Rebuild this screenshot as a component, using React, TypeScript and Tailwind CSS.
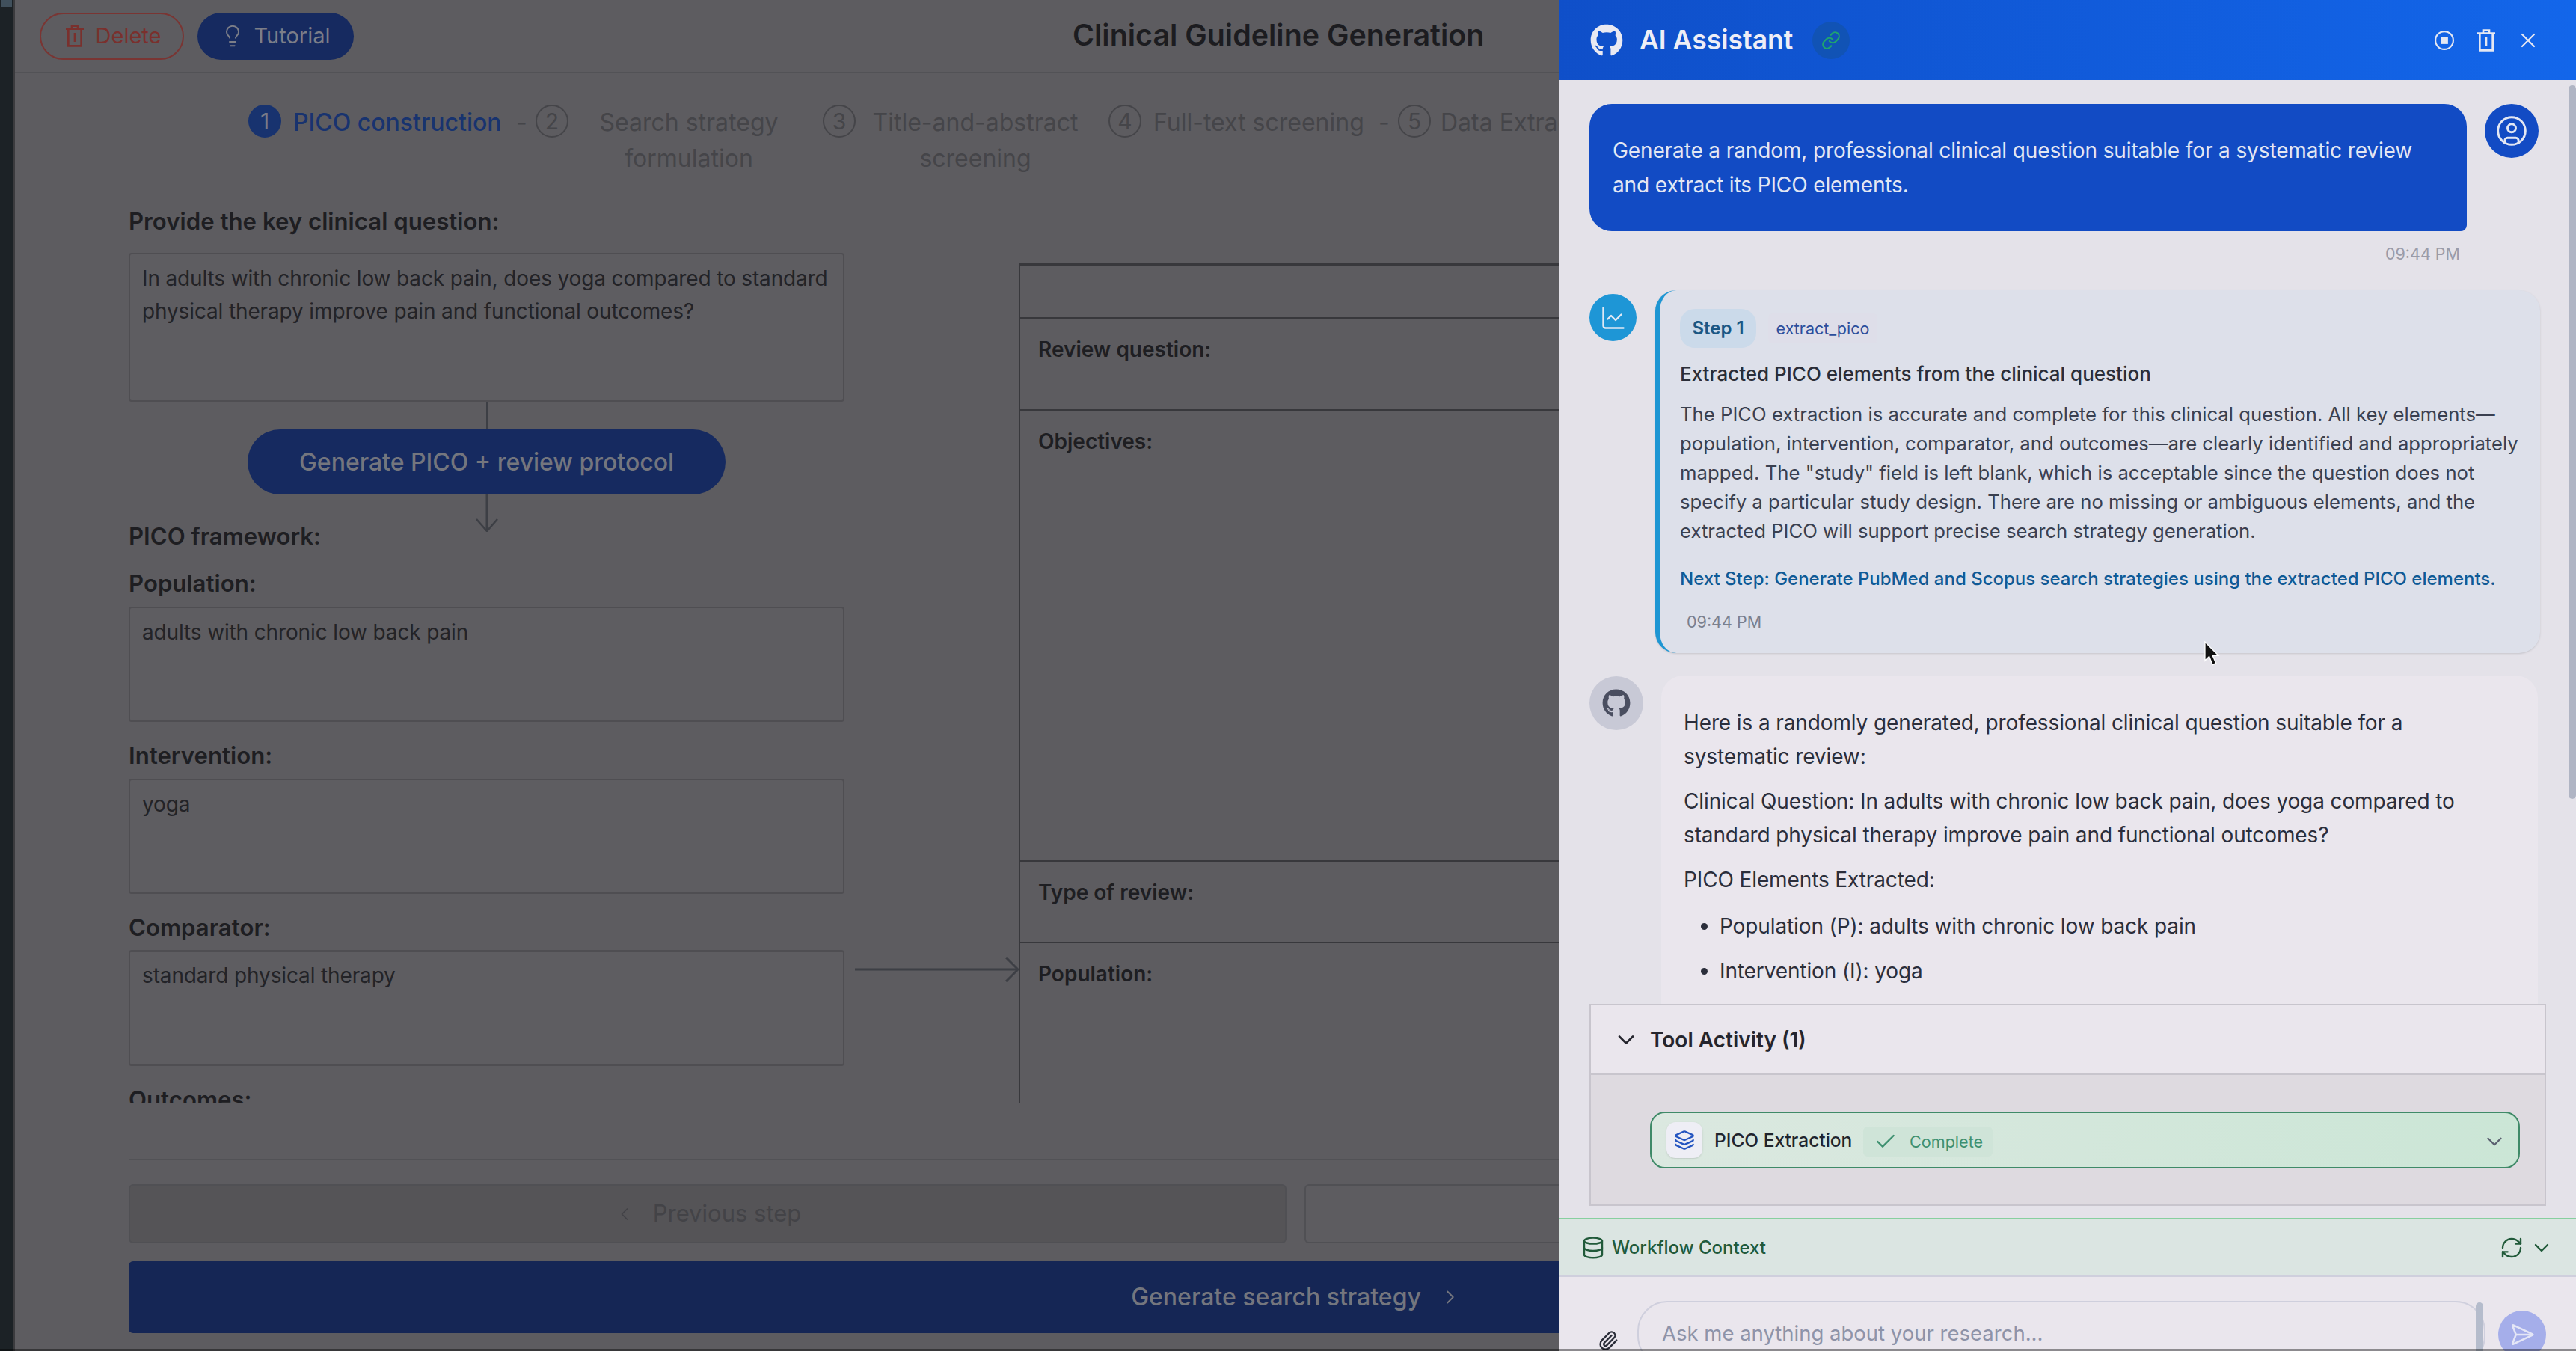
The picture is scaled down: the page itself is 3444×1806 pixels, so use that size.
import { Check, ChevronDown, ChevronLeft, ChevronRight, ChartLine, CircleUser, Database, Layers, Lightbulb, Link, Paperclip, RefreshCw, SendHorizontal, X } from "lucide-react";
import { FaGithub } from "react-icons/fa";

// single-bar trash can, lucide's has two bars
const TrashIcon = ({ className }: { className?: string }) => (
  <svg viewBox="0 0 24 24" fill="none" stroke="currentColor" strokeWidth="2" className={className}>
    <path d="M3 5h18M9 5V2h6v3M5.5 5v17h13V5M12 9v9" />
  </svg>
);

const StopIcon = ({ className }: { className?: string }) => (
  <svg viewBox="0 0 24 24" fill="none" stroke="currentColor" strokeWidth="2" className={className}>
    <circle cx="12" cy="12" r="11" />
    <rect x="7.5" y="7.5" width="9" height="9" fill="currentColor" stroke="none" />
  </svg>
);

const StepNum = ({ n, active, className }: { n: number; active?: boolean; className?: string }) => (
  <div
    className={`flex h-[44px] w-[44px] shrink-0 items-center justify-center rounded-full border-2 text-[30px] ${
      active ? "border-[#18336f] bg-[#18336f] text-[#777b88]" : "border-[#454549] text-[#454549]"
    } ${className ?? ""}`}
  >
    {n}
  </div>
);

const Dash = () => <span className="ml-[20px] w-[26px] shrink-0 text-[32px] leading-[48px] text-[#454549]">-</span>;

const Label = ({ children, className }: { children: string; className?: string }) => (
  <div className={`text-[31.2px] font-semibold leading-[40px] text-[#1e1e22] ${className ?? ""}`}>{children}</div>
);

const Field = ({ value, className }: { value: string; className: string }) => (
  <div className={`rounded-[4px] border-2 border-[#4f4e52] bg-[#5e5d61] px-[16px] py-[10px] text-[28px] leading-[44px] tracking-[-0.14px] text-[#232327] ${className}`}>
    {value}
  </div>
);

const TableRow = ({ title, className }: { title: string; className: string }) => (
  <div className={`border-b-2 border-[#38383c] pl-[24px] pt-[21px] text-[28px] font-semibold leading-[40px] text-[#1e1e22] ${className}`}>
    {title}
  </div>
);

function Workflow() {
  return (
    <div className="relative flex w-[2064px] shrink-0 flex-col overflow-hidden bg-[#5d5c60]">
      <div className="flex h-[98px] shrink-0 items-center border-b-2 border-[#525256] pl-[33px]">
        <button className="flex h-[63px] w-[193px] items-center justify-center gap-[12px] rounded-full border-2 border-[#7a3533] text-[29px] text-[#7a302d]">
          <TrashIcon className="h-[32px] w-[32px]" />
          Delete
        </button>
        <button className="ml-[18px] flex h-[63px] w-[209px] items-center justify-center gap-[12px] rounded-full bg-[#162a60] text-[29px] text-[#7c7e88]">
          <Lightbulb className="h-[32px] w-[32px]" strokeWidth={1.5} />
          Tutorial
        </button>
        <h1 className="ml-[961px] whitespace-nowrap text-[39.4px] font-semibold text-[#1c1c20]">Clinical Guideline Generation</h1>
      </div>

      {/* Stepper, runs under the assistant panel */}
      <div className="flex h-[178px] shrink-0 items-start pl-[312px] pt-[42px] text-[32px] leading-[48px] text-[#454549]">
        <StepNum n={1} active />
        <span className="ml-[16px] w-[278px] shrink-0 whitespace-nowrap font-medium text-[#18336f]">PICO construction</span>
        <Dash />
        <StepNum n={2} />
        <span className="ml-[34px] w-[254px] shrink-0 text-center">Search strategy formulation</span>
        <StepNum n={3} className="ml-[52px]" />
        <span className="ml-[10px] w-[300px] shrink-0 text-center">Title-and-abstract screening</span>
        <StepNum n={4} className="ml-[28px]" />
        <span className="ml-[16px] w-[281px] shrink-0 whitespace-nowrap">Full-text screening</span>
        <Dash />
        <StepNum n={5} />
        <span className="ml-[13px] shrink-0 whitespace-nowrap">Data Extraction</span>
      </div>

      <div className="flex h-[1199px] shrink-0 overflow-hidden pl-[152px]">
        <div className="flex w-[957px] shrink-0 flex-col">
          <Label>Provide the key clinical question:</Label>
          <Field
            className="mt-[22px] h-[199px] shrink-0"
            value="In adults with chronic low back pain, does yoga compared to standard physical therapy improve pain and functional outcomes?"
          />
          <div className="h-[37px] w-[2px] shrink-0 self-center bg-[#3d3f45]" />
          <div className="relative h-[87px] w-[639px] shrink-0 self-center">
            <button className="flex h-full w-full items-center justify-center rounded-full bg-[#162a60] text-[32px] font-medium text-[#74767e]">
              Generate PICO + review protocol
            </button>
            <div className="absolute left-1/2 top-full h-[49px] w-[3px] -translate-x-1/2 bg-[#3d3f45]" />
            <svg viewBox="0 0 32 18" fill="none" stroke="#3d3f45" strokeWidth="2.5" className="absolute left-[304px] top-[119px] h-[18px] w-[32px]">
              <path d="M2 1l14 16L30 1" />
            </svg>
          </div>
          <Label className="mt-[36px]">PICO framework:</Label>
          <Label className="mt-[23px]">Population:</Label>
          <Field className="mt-[11px] h-[154px] shrink-0" value="adults with chronic low back pain" />
          <Label className="mt-[25px]">Intervention:</Label>
          <Field className="mt-[11px] h-[154px] shrink-0" value="yoga" />
          <Label className="mt-[25px]">Comparator:</Label>
          <Field className="mt-[10px] h-[155px] shrink-0" value="standard physical therapy" />
          <Label className="mt-[25px]">Outcomes:</Label>
        </div>

        {/* Protocol table */}
        <div className="relative ml-[233px] mt-[76px] flex w-[800px] shrink-0 flex-col border-l-2 border-t-4 border-[#38383c]">
          <div className="h-[70px] shrink-0 border-b-2 border-[#38383c]" />
          <TableRow className="h-[123px] shrink-0" title="Review question:" />
          <TableRow className="h-[603px] shrink-0" title="Objectives:" />
          <TableRow className="h-[109px] shrink-0" title="Type of review:" />
          <div className="pl-[24px] pt-[21px] text-[28px] font-semibold leading-[40px] text-[#1e1e22]">Population:</div>
          {/* arrow from the form into the table */}
          <svg viewBox="0 0 219 34" fill="none" stroke="#3d3f45" className="absolute left-[-221px] top-[923px] h-[34px] w-[219px]">
            <path d="M0 17h216" strokeWidth="3" />
            <path d="M202 1l16 16-16 16" strokeWidth="3" />
          </svg>
        </div>
      </div>

      <div className="ml-[152px] mt-[74px] w-[1912px] shrink-0 border-t-2 border-[#525256] pt-[32px]">
        <div className="flex gap-[24px]">
          <button className="flex h-[79px] w-[1548px] shrink-0 items-center justify-center gap-[24px] rounded-[6px] border-2 border-[#505054] bg-[#555457] text-[31px] text-[#434347]">
            <ChevronLeft className="h-[28px] w-[28px]" strokeWidth={1.5} />
            Previous step
          </button>
          <div className="h-[79px] w-[700px] shrink-0 rounded-[6px] border-2 border-[#505054]" />
        </div>
        <button className="mt-[24px] flex h-[96px] w-[1912px] items-center justify-center gap-[24px] rounded-l-[6px] bg-[#152655] pl-[1210px] text-[32px] font-medium text-[#74767e]">
          <span className="whitespace-nowrap">Generate search strategy</span>
          <ChevronRight className="h-[30px] w-[30px] shrink-0" strokeWidth={1.5} />
        </button>
      </div>
    </div>
  );
}

function Assistant() {
  return (
    <div className="relative flex w-[1360px] shrink-0 flex-col overflow-hidden bg-[#e4e2e9]">
      <div className="flex h-[107px] shrink-0 items-center bg-gradient-to-r from-[#0f4fc9] to-[#1366ea] pl-[42px]">
        <FaGithub className="h-[44px] w-[44px] text-[#e9e9f2]" />
        <span className="ml-[22px] text-[35.5px] font-semibold text-[#eeeef6]">AI Assistant</span>
        <div className="ml-[26px] flex h-[50px] w-[50px] items-center justify-center rounded-full bg-[#1153b5]">
          <Link className="h-[26px] w-[26px] text-[#1fa56f]" strokeWidth={2} />
        </div>
        <div className="ml-auto flex items-center pr-[48px] text-[#e4e7f2]">
          <StopIcon className="h-[26px] w-[26px]" />
          <TrashIcon className="ml-[27px] h-[32px] w-[32px]" />
          <X className="ml-[24px] h-[32px] w-[32px]" strokeWidth={1.6} />
        </div>
      </div>

      {/* Conversation */}
      <div className="relative h-[1235px] shrink-0 overflow-hidden pl-[41px] pt-[32px]">
        <div className="flex items-start gap-[24px]">
          <div className="h-[170px] w-[1173px] shrink-0 rounded-[30px] rounded-br-[8px] bg-[#124bc4] px-[31px] pt-[39px] text-[28px] leading-[46px] tracking-[-0.12px] text-[#e3e7f3]">
            Generate a random, professional clinical question suitable for a systematic review and extract its PICO elements.
          </div>
          <div className="flex h-[72px] w-[72px] shrink-0 items-center justify-center rounded-full bg-[#124bc4]">
            <CircleUser className="h-[44px] w-[44px] text-[#e3e7f3]" strokeWidth={1.6} />
          </div>
        </div>
        <div className="mt-[15px] w-[1164px] text-right text-[21.5px] leading-[30px] text-[#9a9ba8]">09:44 PM</div>

        <div className="mt-[34px] flex items-start gap-[25px]">
          <div className="mt-[5px] flex h-[63px] w-[63px] shrink-0 items-center justify-center rounded-full bg-[#1e96d6]">
            <ChartLine className="h-[36px] w-[36px] text-[#dfe8f4]" strokeWidth={1.6} />
          </div>
          <div className="h-[485px] w-[1183px] shrink-0 rounded-[28px] border-l-[6px] border-[#1e96d3] bg-[#dde0ea] pl-[27px] pt-[25px] shadow-sm">
            <div className="flex items-center">
              <span className="flex h-[52px] w-[102px] items-center justify-center rounded-[20px] bg-[#cbdaea] text-[24px] font-semibold text-[#1b5784]">Step 1</span>
              <span className="ml-[16px] flex h-[40px] w-[146px] items-center justify-center rounded-[6px] bg-[#dedee9] text-[21.5px] text-[#2c4e9c]">extract_pico</span>
            </div>
            <div className="mt-[16px] text-[26px] font-medium leading-[38px] text-[#2a2d38]">Extracted PICO elements from the clinical question</div>
            <p className="mt-[15px] w-[1130px] text-[25.7px] leading-[39px] text-[#3a4050]">
              The PICO extraction is accurate and complete for this clinical question. All key elements—population, intervention, comparator, and outcomes—are clearly identified and appropriately mapped. The "study" field is left blank, which is acceptable since the question does not specify a particular study design. There are no missing or ambiguous elements, and the extracted PICO will support precise search strategy generation.
            </p>
            <div className="mt-[26px] whitespace-nowrap text-[24px] font-medium leading-[38px] text-[#0f5a96]">
              Next Step: Generate PubMed and Scopus search strategies using the extracted PICO elements.
            </div>
            <div className="mt-[23px] pl-[9px] text-[21.5px] leading-[30px] text-[#7a7f8e]">09:44 PM</div>
          </div>
        </div>

        <div className="mt-[30px] flex items-start gap-[24px]">
          <div className="mt-[1px] flex h-[72px] w-[72px] shrink-0 items-center justify-center rounded-full bg-[#c8c9d6]">
            <FaGithub className="h-[38px] w-[38px] text-[#4a4e60]" />
          </div>
          <div className="h-[600px] w-[1172px] shrink-0 rounded-[30px] bg-[#eae6ed] pl-[30px] pr-[40px] pt-[41px] text-[28px] leading-[45px] tracking-[-0.12px] text-[#2b2e3b]">
            <p>Here is a randomly generated, professional clinical question suitable for a systematic review:</p>
            <p className="mt-[15px]">Clinical Question: In adults with chronic low back pain, does yoga compared to standard physical therapy improve pain and functional outcomes?</p>
            <p className="mt-[15px]">PICO Elements Extracted:</p>
            <ul className="mt-[17px] list-disc pl-[48px]">
              <li>Population (P): adults with chronic low back pain</li>
              <li className="mt-[15px]">Intervention (I): yoga</li>
            </ul>
          </div>
        </div>

        {/* scrollbar and the recorded mouse pointer */}
        <div className="absolute right-0 top-[7px] h-[954px] w-[10px] rounded-full bg-[#b0b5c4]" />
        <svg viewBox="0 0 18 30" className="absolute left-[862px] top-[750px] h-[34px] w-[22px]">
          <path d="M1 1v22l5-5 4 10 4-2-4-9h7z" fill="#111" stroke="#fff" strokeWidth="1.2" />
        </svg>
      </div>

      {/* Tool activity */}
      <div className="ml-[41px] h-[270px] w-[1279px] shrink-0 border-2 border-[#c8c5cd] bg-[#dedae0]">
        <div className="flex h-[93px] items-center border-b-2 border-[#c8c5cd] bg-[#eae6ed] pl-[29px]">
          <ChevronDown className="h-[36px] w-[36px] text-[#25252d]" strokeWidth={1.8} />
          <span className="ml-[14px] text-[28px] font-semibold text-[#25252d]">Tool Activity (1)</span>
        </div>
        <div className="ml-[79px] mt-[49px] flex h-[76px] w-[1163px] items-center rounded-[20px] border-2 border-[#3f8a68] bg-gradient-to-r from-[#dbe8e0] to-[#cbe6d6] pl-[20px] pr-[15px]">
          <div className="flex h-[48px] w-[48px] shrink-0 items-center justify-center rounded-[12px] bg-[#eeeef5] shadow-sm">
            <Layers className="h-[28px] w-[28px] text-[#2455c0]" strokeWidth={2} />
          </div>
          <span className="ml-[16px] w-[183px] shrink-0 whitespace-nowrap text-[24.5px] font-medium text-[#20242e]">PICO Extraction</span>
          <div className="ml-[16px] mt-[4px] flex h-[40px] w-[173px] shrink-0 items-center rounded-[6px] bg-[#cfe4d8] pl-[14px]">
            <Check className="h-[32px] w-[32px] text-[#3e9070]" strokeWidth={1.8} />
            <span className="ml-[16px] text-[21.6px] text-[#3e9070]">Complete</span>
          </div>
          <ChevronDown className="ml-auto mt-[4px] h-[34px] w-[34px] text-[#5a6070]" strokeWidth={1.6} />
        </div>
      </div>

      {/* Workflow context bar */}
      <div className="mt-[16px] flex h-[79px] shrink-0 items-center border-b-2 border-t-2 border-b-[#cfcfdd] border-t-[#87cf9f] bg-[#dbe5e2] pl-[30px] pr-[30px] text-[#215a3a]">
        <Database className="h-[32px] w-[32px]" strokeWidth={1.8} />
        <span className="ml-[9px] text-[24px] font-medium">Workflow Context</span>
        <RefreshCw className="ml-auto h-[32px] w-[32px]" strokeWidth={1.8} />
        <ChevronDown className="ml-[8px] h-[32px] w-[32px]" strokeWidth={1.8} />
      </div>

      {/* Composer, cut off by the window */}
      <div className="flex flex-1 items-start bg-[#eae6ed] pl-[52px] pt-[32px]">
        <Paperclip className="mt-[39px] h-[28px] w-[28px] shrink-0 text-[#2a2d38]" strokeWidth={2} />
        <div className="relative ml-[25px] flex h-[87px] w-[1134px] shrink-0 items-center rounded-[40px] border-2 border-[#cfcfdd] pl-[31px] text-[27.5px] text-[#8e93a8]">
          Ask me anything about your research...
          <div className="absolute right-[1px] top-0 h-full w-[10px] rounded-full bg-[#b5bccc]" />
        </div>
        <div className="ml-[17px] mt-[13px] flex h-[64px] w-[64px] shrink-0 items-center justify-center rounded-full bg-[#a5aeea]">
          <SendHorizontal className="h-[34px] w-[34px] text-[#e4e6f6]" strokeWidth={1.8} />
        </div>
      </div>
    </div>
  );
}

export default function App() {
  return (
    <div className="relative flex h-[1806px] w-[3444px] overflow-hidden bg-[#5d5c60] [font-family:Inter,sans-serif]">
      <div className="h-full w-[20px] shrink-0 border-r-2 border-[#3b3b3e] bg-[#1c2226]">
        <div className="mx-[2px] h-[10px] bg-[#40505c]" />
      </div>
      <Workflow />
      <Assistant />
      <div className="absolute inset-x-0 bottom-0 h-[3px] bg-black/40" />
    </div>
  );
}
